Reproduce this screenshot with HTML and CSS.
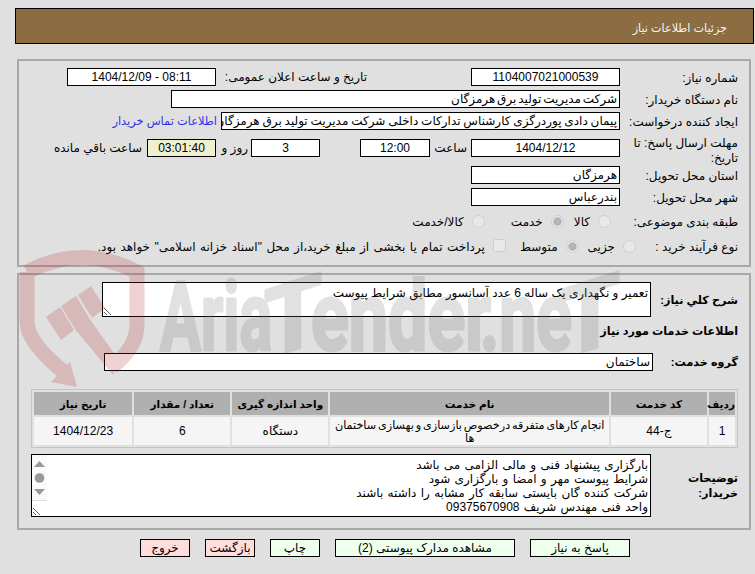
FILE: index.html
```html
<!DOCTYPE html>
<html lang="fa" dir="rtl">
<head>
<meta charset="utf-8">
<title>جزئیات اطلاعات نیاز</title>
<link rel="stylesheet" href="styles.css">
</head>
<body>
<header class="page-head"><h1 class="page-title">جزئیات اطلاعات نیاز</h1></header>

<section class="panel panel-info">
  <div class="row">
    <div class="label">شماره نیاز:</div>
    <div class="field w150 center num">1104007021000539</div>
    <div class="label-inline public">تاریخ و ساعت اعلان عمومی:</div>
    <div class="field w150 center num ltr">1404/12/09 - 08:11</div>
  </div>
  <div class="row">
    <div class="label">نام دستگاه خریدار:</div>
    <div class="field w450 tight">شرکت مدیریت تولید برق هرمزگان</div>
  </div>
  <div class="row">
    <div class="label">ایجاد کننده درخواست:</div>
    <div class="field w400 slight">پیمان دادی پوردرگزی کارشناس تدارکات داخلی شرکت مدیریت تولید برق هرمزگان</div>
    <a class="contact" href="#">اطلاعات تماس خریدار</a>
  </div>
  <div class="row row-deadline">
    <div class="label">مهلت ارسال پاسخ: تا تاریخ:</div>
    <div class="field w150 center num">1404/12/12</div>
    <div class="label-inline hour">ساعت</div>
    <div class="field w70 center num">12:00</div>
    <div class="field w69 center days num">3</div>
    <div class="label-inline day">روز و</div>
    <div class="field w69 center timer num">03:01:40</div>
    <div class="label-inline left">ساعت باقي مانده</div>
  </div>
  <div class="row">
    <div class="label">استان محل تحویل:</div>
    <div class="field w150">هرمزگان</div>
  </div>
  <div class="row">
    <div class="label">شهر محل تحویل:</div>
    <div class="field w150">بندرعباس</div>
  </div>
  <div class="row row-choice row-cat">
    <div class="label label-cat">طبقه بندی موضوعی:</div>
    <label class="opt opt-goods"><input class="radio" type="radio" name="cat" disabled><span>کالا</span></label>
    <label class="opt opt-service"><input class="radio" type="radio" name="cat" checked disabled><span>خدمت</span></label>
    <label class="opt"><input class="radio" type="radio" name="cat" disabled><span>کالا/خدمت</span></label>
  </div>
  <div class="row row-choice">
    <div class="label label-proc">نوع فرآیند خرید :</div>
    <label class="opt opt-small"><input class="radio" type="radio" name="proc" disabled><span>جزیی</span></label>
    <label class="opt opt-medium"><input class="radio" type="radio" name="proc" checked disabled><span>متوسط</span></label>
    <label class="opt"><input class="check" type="checkbox" disabled><span class="airy">پرداخت تمام یا بخشی از مبلغ خرید،از محل "اسناد خزانه اسلامی" خواهد بود.</span></label>
  </div>
</section>

<section class="panel panel-need">
  <div class="row row-summary">
    <div class="label-strong w87 single">شرح کلي نياز:</div>
    <textarea class="area area-summary" readonly>تعمیر و نگهداری یک ساله 6 عدد آسانسور مطابق شرایط پیوست</textarea>
  </div>
  <h2 class="section-title">اطلاعات خدمات مورد نیاز</h2>
  <div class="row row-group">
    <div class="label-strong w85 single">گروه خدمت:</div>
    <div class="field w550">ساختمان</div>
  </div>
  <table class="items">
    <colgroup>
      <col class="c-row"><col class="c-code"><col class="c-name"><col class="c-unit"><col class="c-qty"><col class="c-date">
    </colgroup>
    <thead>
      <tr><th>ردیف</th><th>کد خدمت</th><th>نام خدمت</th><th>واحد اندازه گیری</th><th>تعداد / مقدار</th><th>تاریخ نیاز</th></tr>
    </thead>
    <tbody>
      <tr><td>1</td><td>ج-44</td><td class="name">انجام کارهای متفرقه درخصوص بازسازی و بهسازی ساختمان ها</td><td>دستگاه</td><td>6</td><td class="num">1404/12/23</td></tr>
    </tbody>
  </table>
  <div class="row row-notes">
    <div class="label-strong w87 notes-label">توضیحات خریدار:</div>
    <div class="notes-wrap">
      <textarea class="area area-notes" readonly>بارگزاری پیشنهاد فنی و مالی الزامی می باشد
شرایط پیوست مهر و امضا و بارگزاری شود
شرکت کننده گان بایستی سابقه کار مشابه را داشته باشند
واحد فنی مهندس شریف 09375670908</textarea>
      <svg class="fake-scroll" viewBox="0 0 15 46" width="15" height="46" aria-hidden="true">
        <rect width="15" height="46" fill="#fafafa"/>
        <polygon points="7.5,6 13,12 2,12" fill="#999"/>
        <circle cx="7.5" cy="23" r="4.8" fill="#999"/>
        <polygon points="2,34 13,34 7.5,40" fill="#999"/>
        <rect y="45" width="15" height="1" fill="#ddd"/>
      </svg>
    </div>
  </div>
</section>

<nav class="actions">
  <button class="btn ok b100" type="button">پاسخ به نیاز</button>
  <button class="btn ok b180" type="button">مشاهده مدارک پیوستی (2)</button>
  <button class="btn ok b50" type="button">چاپ</button>
  <button class="btn no b50" type="button">بازگشت</button>
  <button class="btn no b50" type="button">خروج</button>
</nav>

<svg class="watermark" viewBox="0 0 755 574" width="755" height="574" aria-hidden="true">
  <g class="wm-red">
    <path class="wm-shield" d="M27 272 Q82 243 137 272 L137 325 Q137 347 112 367"/>
    <path class="wm-shield" d="M27 272 L27 322 Q27 342 65 373"/>
    <polygon points="70,362 77,387 51,382"/>
    <polygon points="46,317 60,307 74,330 61,340"/>
    <polygon points="61,306 76,296 91,321 119,360 113,375 75,329"/>
    <polygon points="78,295 91,286 105,308 92,318"/>
  </g>
  <g class="wm-gray">
    <text x="160" y="350" textLength="112" lengthAdjust="spacingAndGlyphs">Aria</text>
    <text x="264" y="350" textLength="58" lengthAdjust="spacingAndGlyphs" transform="translate(0 95) skewY(-18)">T</text>
    <text x="311" y="350" textLength="180" lengthAdjust="spacingAndGlyphs">ender</text>
    <text x="480" y="350" textLength="92" lengthAdjust="spacingAndGlyphs">.ne</text>
    <text x="560" y="350" textLength="60" lengthAdjust="spacingAndGlyphs" transform="translate(0 191) skewY(-18)">T</text>
  </g>
</svg>
</body>
</html>
```
FILE: styles.css
```css
* { box-sizing: border-box; }
html, body { margin: 0; padding: 0; }
body {
  position: relative;
  width: 755px;
  height: 574px;
  overflow: hidden;
  background: #e0e0e0;
  color: #000;
  font: 12px/14px "Liberation Sans", "DejaVu Sans", sans-serif;
}
.page-head {
  margin: 8px 1px 0 15px;
  height: 36px;
  background: #8c6d42;
  border: 1px solid #000;
  display: flex;
  align-items: center;
  padding: 3px 26px 0 0;
}
.page-title { margin: 0; font-size: 11.2px; font-weight: normal; color: #f4f4f4; }
.panel {
  margin: 0 4px 0 17px;
  border: 2px solid #a8a8a8;
}
.panel-info { margin-top: 15px; height: 208px; padding: 7px 11px 0 0; }
.panel-need { margin-top: 6px; height: 257px; padding: 7px 11px 0 0; }
.row { display: flex; align-items: center; margin-bottom: 4px; }
.label { width: 118px; flex: none; padding-top: 2px; }
.label-inline { flex: none; }
.field {
  flex: none;
  height: 18px;
  line-height: 16px;
  background: #fff;
  border: 1px solid #000;
  padding: 0 2px;
  white-space: nowrap;
  overflow: hidden;
}
.center { text-align: center; }
.ltr { direction: ltr; }
.tight { word-spacing: -1.5px; }
.slight { word-spacing: -.5px; }
.airy { word-spacing: 1.1px; }
.w150 { width: 149px; }
.w450 { width: 449px; }
.w400 { width: 399px; }
.w70 { width: 70px; }
.w69 { width: 69px; }
.w550 { width: 549px; }
.public { width: 146px; margin: 0 104px 0 5px; }
.contact { color: #3030e8; text-decoration: none; margin-right: 4px; white-space: nowrap; font-size: 11.4px; }
.row-deadline { height: 28px; align-items: flex-start; }
.row-deadline .label { line-height: 15px; }
.row-deadline .field { margin-top: 5px; }
.row-deadline .label-inline { margin-top: 7px; }
.hour { margin: 0 4px; width: 33px; }
.days { margin-right: 40px; }
.day { margin: 0 3px; width: 29px; }
.timer { background: #f0f0d0; }
.left { margin-right: 5px; }
.row-choice { height: 25px; margin-bottom: 0; }
.row-cat { margin-top: -1px; }
.row-choice .label { padding-top: 0; }
.row-choice .label-cat { width: 127px; }
.row-choice .label-proc { width: 102px; }
.opt { display: flex; align-items: center; flex: none; }
.opt span { margin-right: 8px; white-space: nowrap; }
.opt-goods { margin-left: 10px; }
.opt-service { margin-left: 26px; }
.opt-small { margin-left: 9px; }
.opt-medium { margin-left: 14px; }
.radio, .check {
  appearance: none;
  margin: 0;
  flex: none;
  width: 13px;
  height: 13px;
  background: #e8e8e8;
  border: 1px solid #cfcfcf;
  border-radius: 50%;
}
.radio:checked { background: radial-gradient(circle, #b4b4b4 0 3.8px, #e8e8e8 4.6px); }
.check { border-radius: 2px; margin-top: -3px; }
.label-strong { flex: none; font-weight: bold; font-size: 11.2px; color: #000; }
.single { white-space: nowrap; }
.w87 { width: 87px; }
.w85 { width: 85px; }
.area {
  display: block;
  flex: none;
  margin: 0;
  background: #fff;
  border: 1px solid #000;
  border-radius: 0;
  padding: 3px 2px 1px;
  color: #000;
  font: 12px/14px "Liberation Sans", "DejaVu Sans", sans-serif;
  outline: none;
}
.area-summary { width: 549px; height: 35px; resize: both; }
.notes-wrap { position: relative; flex: none; width: 620px; height: 63px; }
.area-notes { width: 620px; height: 63px; overflow: hidden; resize: both; word-spacing: 1px; }
.fake-scroll { position: absolute; left: 1px; top: 1px; pointer-events: none; }
.row-summary { margin-bottom: 0; }
.section-title { margin: 7px 0 0; height: 14px; line-height: 14px; font-size: 11.2px; font-weight: bold; color: #000; }
.row-group { margin: 15px 0 0; }
.items {
  direction: rtl;
  margin: 18px 0 0 11px;
  width: 707px;
  table-layout: fixed;
  border-collapse: separate;
  border-spacing: 2px;
  border: 1px solid #c4c4c4;
  text-align: center;
}
.items th { height: 23px; padding: 0; background: #b0b0b0; font-size: 10.5px; color: #000; }
.items td { height: 28px; padding: 0 2px; background: #f5f5f5; }
.items td.name { vertical-align: top; padding: 2px 1px 0; line-height: 13px; font-size: 11.2px; word-spacing: -1.2px; }
.c-row { width: 26px; }
.c-code { width: 96px; }
.c-name { width: 278px; }
.c-unit { width: 96px; }
.c-qty { width: 96px; }
.c-date { width: 98px; }
.row-notes { margin: 6px 0 0; }
.notes-label { line-height: 15px; }
.actions { display: flex; margin: 9px 125px 0 0; gap: 15px; }
.btn {
  flex: none;
  height: 18px;
  padding: 0;
  border: 1px solid #000;
  border-radius: 0;
  color: #000;
  font: 12px/14px "Liberation Sans", "DejaVu Sans", sans-serif;
}
.ok { background: #eeffee; }
.no { background: #ffdddd; }
.b100 { width: 100px; }
.b180 { width: 180px; }
.b50 { width: 50px; }
.watermark { position: absolute; top: 0; left: 0; direction: ltr; pointer-events: none; }
.wm-red { opacity: .2; fill: #b42020; }
.wm-shield { fill: none; stroke: #b42020; stroke-width: 15; }
.wm-gray { opacity: .2; fill: #707070; stroke: #707070; stroke-width: 3; stroke-linejoin: round; font: 700 96px "Roboto", sans-serif; }
```
